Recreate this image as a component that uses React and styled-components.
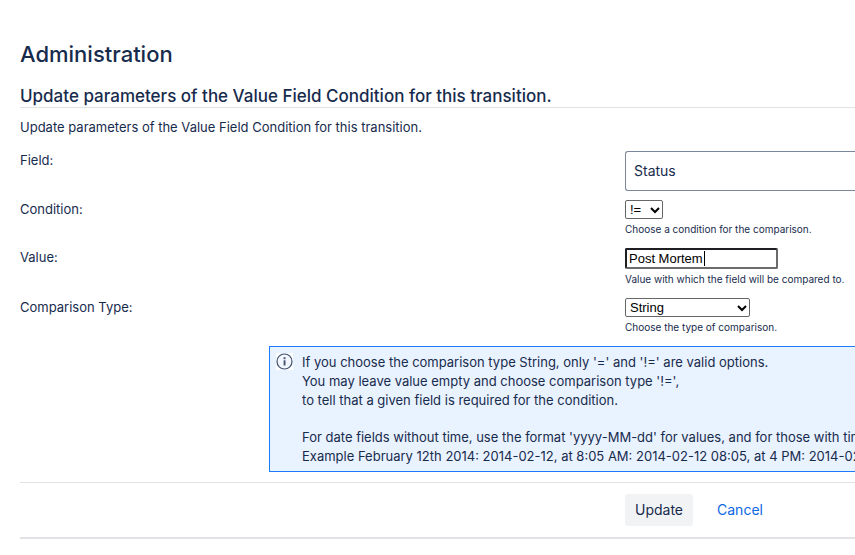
import React, { useEffect, useRef } from "react";
import styled, { createGlobalStyle } from 'styled-components'

const GlobalStyle = createGlobalStyle`
	body {
		margin: 0;
		background: #fff;
		color: #172b4d;
		font: 13px/18px Inter, "Liberation Sans", sans-serif;
		overflow-x: hidden;
	}
`

const Page = styled.main`
	padding: 40px 0 16px 20px;
`

const Title = styled.h1`
	margin: 0 0 18px;
	font-size: 22px;
	line-height: 28px;
	font-weight: 500;
`

const SectionTitle = styled.h2`
	margin: 0;
	border-bottom: 1px solid #e1e2e4;
	font-size: 17px;
	line-height: 21px;
	font-weight: 500;
`

const Description = styled.p`
	margin: 10px 0 15px;
`

const Form = styled.form`
	display: flex;
	flex-direction: column;
	gap: 9px;
`

const Row = styled.div`
	display: grid;
	grid-template-columns: 1fr 230px;
	align-items: start;
	white-space: nowrap;
`

const Help = styled.small`
	display: block;
	font-size: 10px;
	line-height: 20px;
`

const FieldSelect = styled.select`
	appearance: none;
	display: block;
	box-sizing: border-box;
	width: 100%;
	height: 40px;
	padding: 0 8px;
	border: 1px solid #7a869a;
	border-right: 0;
	border-radius: 3px 0 0 3px;
	background: #fff;
	color: #172b4d;
	font: 14px/20px Inter, sans-serif;
`

const SelectBox = styled.div`
	display: grid;
	width: ${props => props.$width};
	align-items: center;

	svg {
		grid-area: 1 / 1;
		justify-self: end;
		margin-right: 3px;
		pointer-events: none;
	}
`

const Select = styled.select`
	appearance: none;
	grid-area: 1 / 1;
	box-sizing: border-box;
	width: 100%;
	height: 19px;
	margin: 0;
	padding: 0 4px;
	border: 1px solid #666;
	border-radius: 2px;
	background: #fff;
	color: #000;
	font: 13px/17px "Liberation Sans", Arial, sans-serif;
`

const InputBox = styled.div`
	position: relative;
	width: 153px;
`

const TextInput = styled.input`
	display: block;
	box-sizing: border-box;
	width: 100%;
	height: 21px;
	margin: 0;
	padding: 1px 2px;
	border: 2px solid;
	border-color: #1f1f23 #6b6b6b #6b6b6b #1f1f23;
	border-radius: 2px;
	outline: none;
	color: #000;
	caret-color: transparent;
	font: 13px/15px "Liberation Sans", Arial, sans-serif;
`

const Caret = styled.span`
	position: absolute;
	top: 3px;
	left: 79px;
	width: 1px;
	height: 15px;
	background: #000;
	pointer-events: none;
`

const Info = styled.aside`
	display: flex;
	gap: 9px;
	margin-left: 249px;
	padding: 6px 0 5px 6px;
	border: 1px solid #1d7afc;
	border-right: 0;
	background: #e9f2ff;
	line-height: 19px;
	white-space: nowrap;
	overflow: hidden;

	svg {
		flex: none;
	}

	p {
		margin: 0;
	}

	p + p {
		margin-top: 18px;
	}
`

const Actions = styled.div`
	display: grid;
	grid-template-columns: 1fr 230px;
	margin-top: 1px;
	padding: 11px 0;
	border-top: 1px solid #e1e2e6;
	border-bottom: 2px solid #e1e2e6;
`

const Buttons = styled.div`
	grid-column: 2;
	display: flex;
	align-items: center;
	gap: 24px;
`

const Button = styled.button`
	height: 32px;
	padding: 0 10px;
	border: 0;
	border-radius: 3px;
	background: #f2f3f5;
	color: #172b4d;
	font: 14px/20px Inter, sans-serif;
`

const CancelLink = styled.a`
	color: #0c66e4;
	font-size: 14px;
	text-decoration: none;
`

function Chevron() {
	return (
		<svg width="10" height="8" viewBox="0 0 10 8" fill="none" stroke="#000" strokeWidth="2" aria-hidden="true">
			<path d="M1 2l4 4 4-4" />
		</svg>
	)
}

function InfoIcon() {
	return (
		<svg width="17" height="17" viewBox="0 0 17 17" aria-hidden="true">
			<rect width="17" height="17" fill="#fff" />
			<circle cx="8.5" cy="8.5" r="8.4" fill="#f2f7ff" />
			<circle cx="8.5" cy="8.5" r="7.5" fill="none" stroke="#44546f" strokeWidth="1.2" />
			<rect x="7.6" y="4.2" width="1.9" height="2" fill="#44546f" />
			<rect x="7.6" y="7.3" width="1.9" height="5.2" fill="#44546f" />
		</svg>
	)
}

export default function App() {
	const valueInput = useRef(null)

	useEffect(() => {
		const input = valueInput.current
		input.focus()
		input.setSelectionRange(input.value.length, input.value.length)
	}, [])

	return (
		<Page>
			<GlobalStyle />
			<Title>Administration</Title>
			<SectionTitle>Update parameters of the Value Field Condition for this transition.</SectionTitle>
			<Description>Update parameters of the Value Field Condition for this transition.</Description>
			<Form onSubmit={e => e.preventDefault()}>
				<Row>
					<label htmlFor="field">Field:</label>
					<FieldSelect id="field">
						<option>Status</option>
					</FieldSelect>
				</Row>
				<Row>
					<label htmlFor="condition">Condition:</label>
					<div>
						<SelectBox $width="38px">
							<Select id="condition" aria-describedby="condition-help">
								<option>!=</option>
								<option>=</option>
							</Select>
							<Chevron />
						</SelectBox>
						<Help id="condition-help">Choose a condition for the comparison.</Help>
					</div>
				</Row>
				<Row>
					<label htmlFor="value">Value:</label>
					<div>
						<InputBox>
							<TextInput id="value" ref={valueInput} defaultValue="Post Mortem" aria-describedby="value-help" />
							<Caret />
						</InputBox>
						<Help id="value-help">Value with which the field will be compared to.</Help>
					</div>
				</Row>
				<Row>
					<label htmlFor="comparison">Comparison Type:</label>
					<div>
						<SelectBox $width="125px">
							<Select id="comparison" aria-describedby="comparison-help">
								<option>String</option>
							</Select>
							<Chevron />
						</SelectBox>
						<Help id="comparison-help">Choose the type of comparison.</Help>
					</div>
				</Row>
				<Info>
					<InfoIcon />
					<div>
						<p>
							If you choose the comparison type String, only '=' and '!=' are valid options.<br />
							You may leave value empty and choose comparison type '!=',<br />
							to tell that a given field is required for the condition.
						</p>
						<p>
							For date fields without time, use the format 'yyyy-MM-dd' for values, and for those with time<br />
							Example February 12th 2014: 2014-02-12, at 8:05 AM: 2014-02-12 08:05, at 4 PM: 2014-02-12
						</p>
					</div>
				</Info>
				<Actions>
					<Buttons>
						<Button type="submit">Update</Button>
						<CancelLink href="#cancel">Cancel</CancelLink>
					</Buttons>
				</Actions>
			</Form>
		</Page>
	)
}
